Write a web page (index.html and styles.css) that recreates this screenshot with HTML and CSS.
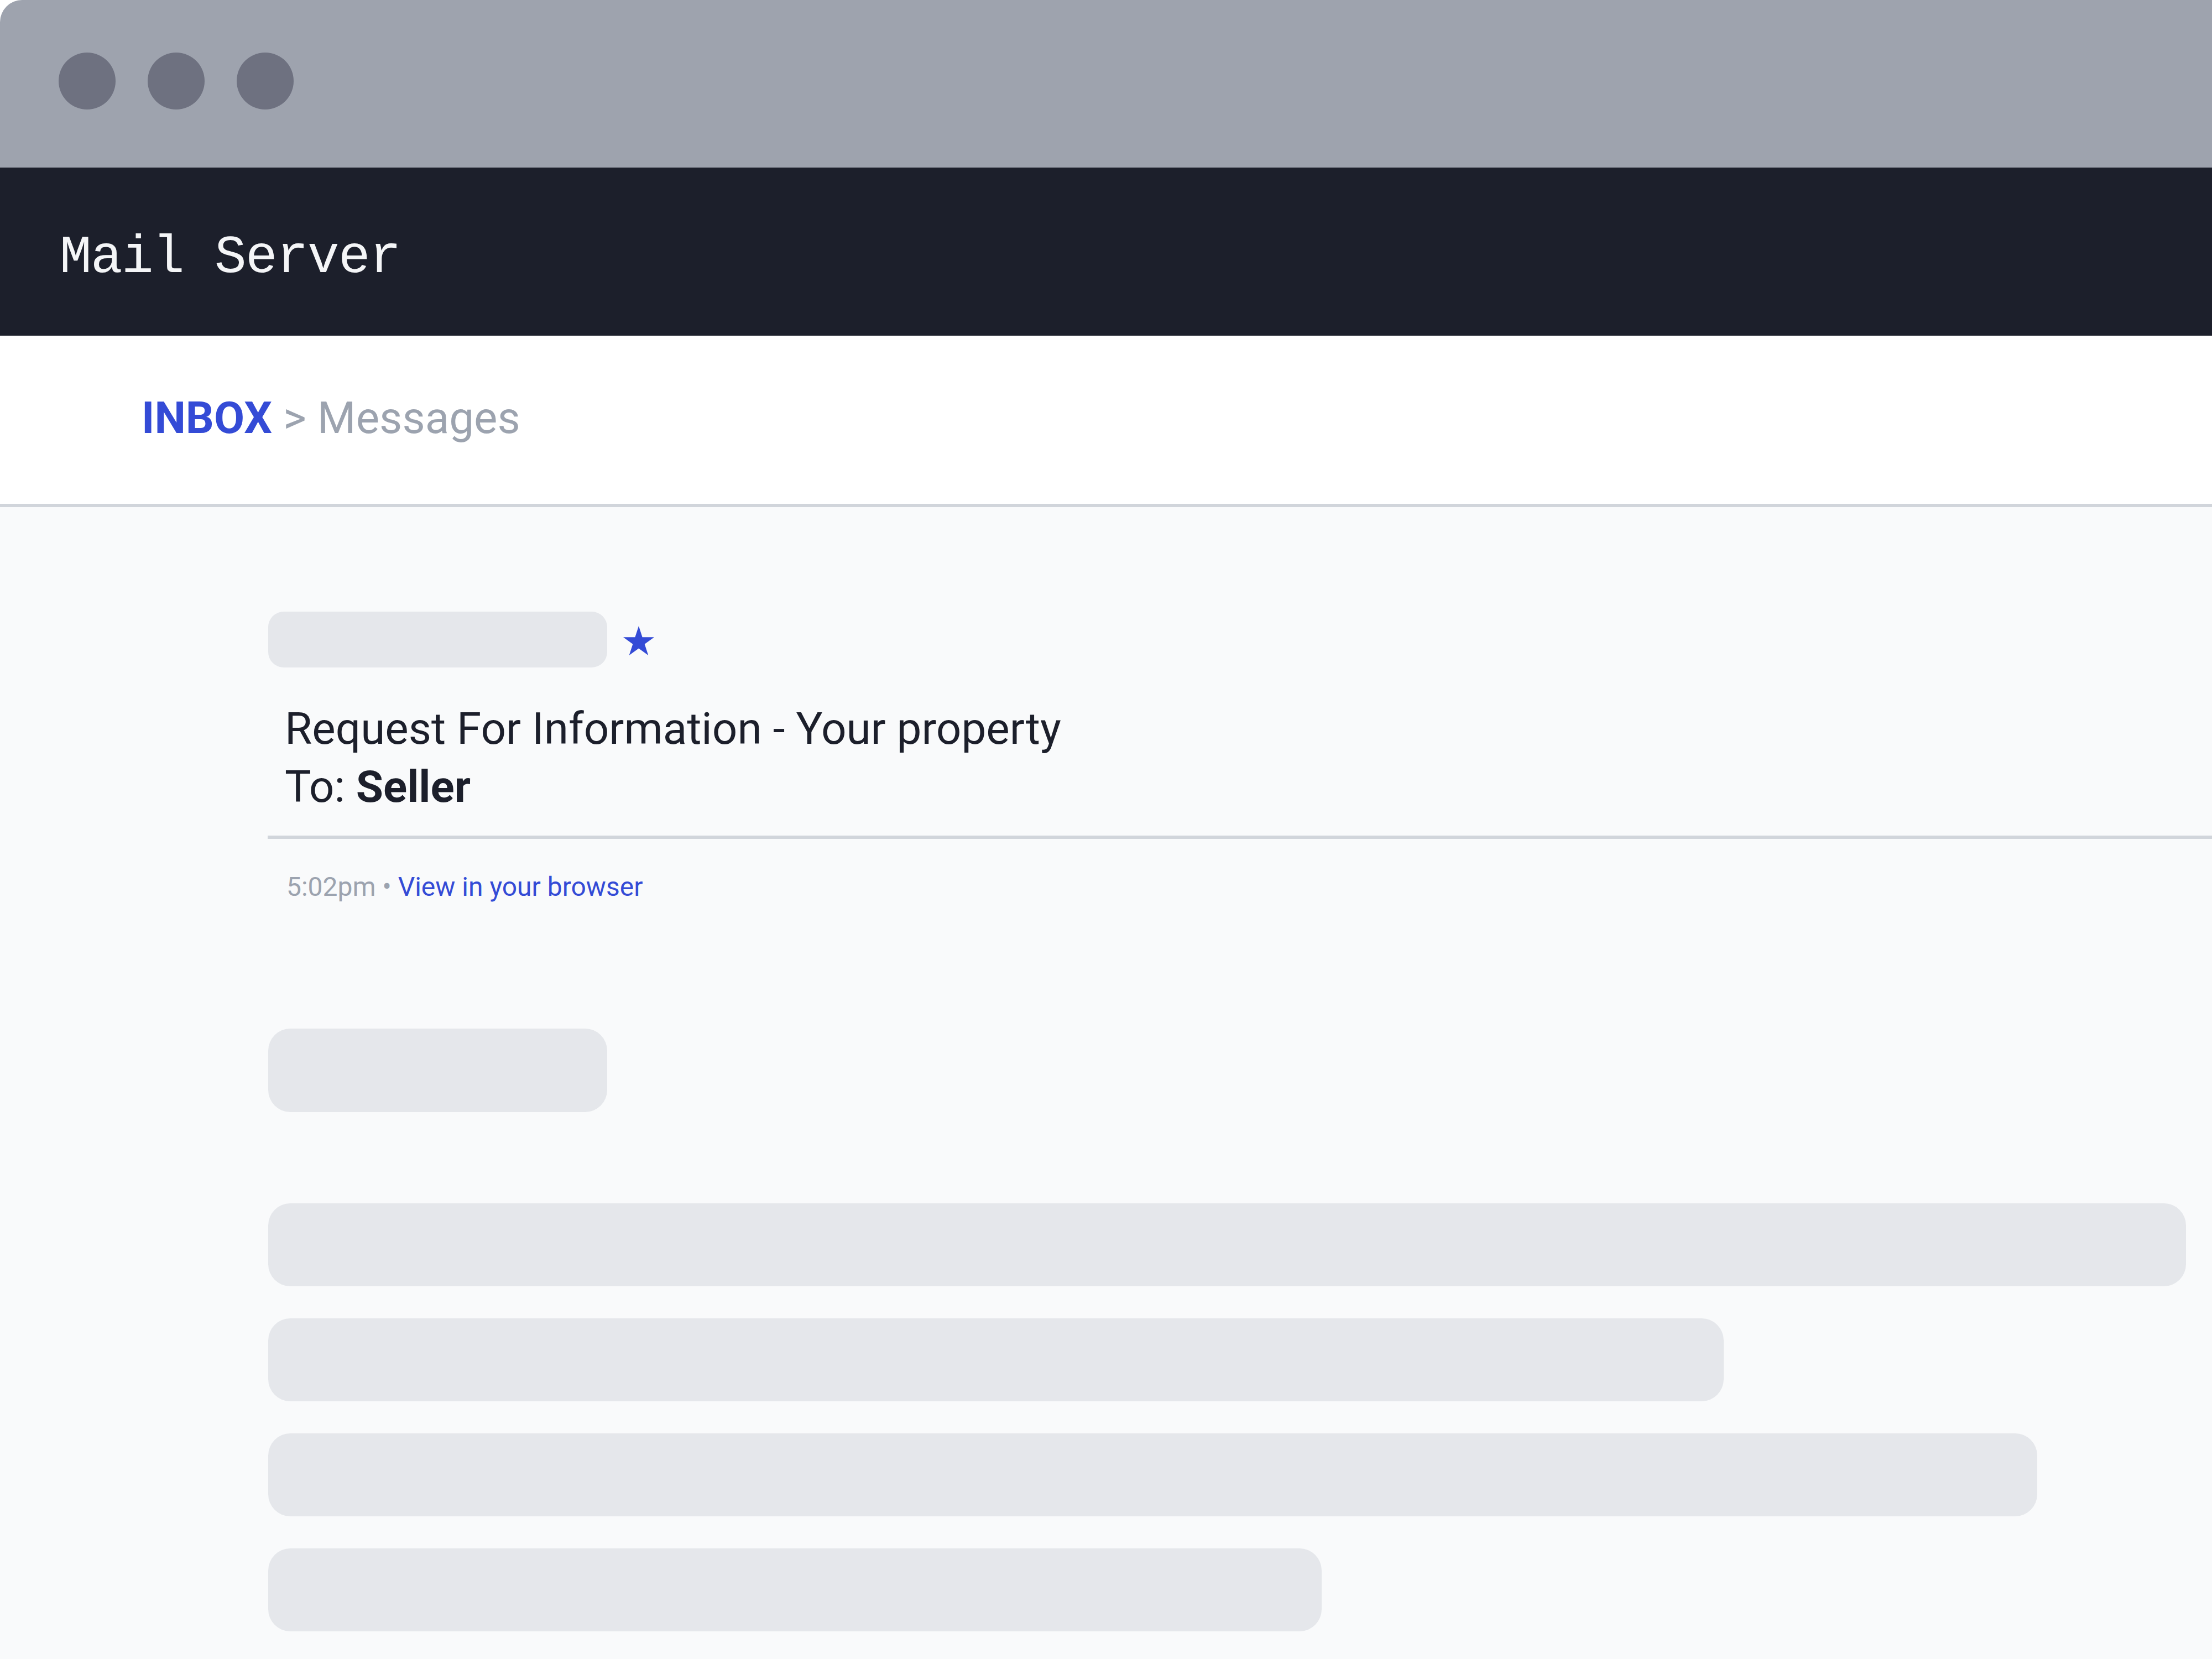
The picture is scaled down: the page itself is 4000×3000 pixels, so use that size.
FILE: index.html
```html
<!DOCTYPE html>
<html>
<head>
<meta charset="utf-8">
<link rel="stylesheet" href="styles.css">
</head>
<body>
<div class="window">
  <div class="titlebar">
    <span class="dot"></span>
    <span class="dot"></span>
    <span class="dot"></span>
  </div>
  <div class="appbar">
    <span class="app-title">Mail Server</span>
  </div>
  <div class="crumbs">
    <span class="crumb-main">INBOX</span>
    <span class="crumb-sep">&gt;</span>
    <span class="crumb-sub">Messages</span>
  </div>
  <div class="content">
    <div class="sender-row">
      <div class="skel skel-sender"></div>
      <svg class="star" viewBox="0 0 56 53" aria-hidden="true">
        <polygon points="28,0 34.6,20.2 56,20.2 38.7,32.7 45.3,53 28,40.5 10.7,53 17.3,32.7 0,20.2 21.4,20.2" fill="#344bd6"/>
      </svg>
    </div>
    <div class="subject">
      <div>Request For Information - Your property</div>
      <div>To: <b>Seller</b></div>
    </div>
    <div class="divider"></div>
    <div class="meta"><span class="time">5:02pm</span> <span class="bullet">&bull;</span> <span class="link">View in your browser</span></div>
    <div class="skel skel-title"></div>
    <div class="lines">
      <div class="skel skel-line w1"></div>
      <div class="skel skel-line w2"></div>
      <div class="skel skel-line w3"></div>
      <div class="skel skel-line w4"></div>
    </div>
  </div>
</div>
</body>
</html>
```
FILE: styles.css
```css
html, body {
  margin: 0;
  padding: 0;
  background: #ffffff;
}
body {
  width: 4000px;
  height: 3000px;
  overflow: hidden;
  font-family: Roboto, "Liberation Sans", sans-serif;
}
.window {
  width: 4000px;
  height: 3000px;
  border-top-left-radius: 40px;
  overflow: hidden;
  background: #f9fafb;
  display: flex;
  flex-direction: column;
}
.titlebar {
  height: 303px;
  flex: none;
  background: #9ea3ae;
  display: flex;
  align-items: center;
  gap: 58px;
  padding-left: 106px;
  padding-bottom: 10px;
  box-sizing: border-box;
}
.dot {
  width: 103px;
  height: 103px;
  border-radius: 50%;
  background: #6e7180;
}
.appbar {
  height: 304px;
  flex: none;
  background: #1c1f2b;
  display: flex;
  align-items: center;
  padding-left: 108px;
  padding-top: 22px;
  box-sizing: border-box;
}
.app-title {
  font-family: "Liberation Mono", "DejaVu Sans Mono", monospace;
  font-size: 96px;
  letter-spacing: -1.6px;
  color: #f4f5f7;
  white-space: pre;
}
.crumbs {
  height: 310px;
  flex: none;
  background: #ffffff;
  border-bottom: 6px solid #d1d5db;
  box-sizing: border-box;
  display: flex;
  align-items: center;
  padding-left: 256px;
  padding-bottom: 6px;
  font-size: 80px;
  gap: 20px;
}
.crumb-main {
  font-weight: 700;
  color: #344bd6;
}
.crumb-sep, .crumb-sub {
  color: #9ca3af;
}
.content {
  padding-left: 485px;
  padding-top: 189px;
  display: flex;
  flex-direction: column;
}
.skel {
  background: #e5e7eb;
}
.sender-row {
  display: flex;
  align-items: center;
  gap: 29px;
}
.skel-sender {
  width: 613px;
  height: 101px;
  border-radius: 28px;
}
.star {
  width: 56px;
  height: 53px;
  margin-top: 4px;
}
.subject {
  margin-top: 59px;
  padding-left: 30px;
  font-size: 80px;
  line-height: 105px;
  color: #1c1f2b;
}
.subject b {
  font-weight: 700;
}
.divider {
  margin-top: 35px;
  height: 6px;
  background: #d1d5db;
  margin-left: -1px;
}
.meta {
  margin-top: 57px;
  padding-left: 33px;
  font-size: 48px;
  line-height: 60px;
  color: #9ca3af;
}
.meta .link {
  color: #344bd6;
}
.skel-title {
  margin-top: 226px;
  width: 613px;
  height: 151px;
  border-radius: 40px;
}
.lines {
  margin-top: 165px;
  display: flex;
  flex-direction: column;
  gap: 58px;
}
.skel-line {
  height: 150px;
  border-radius: 40px;
}
.w1 { width: 3468px; }
.w2 { width: 2632px; }
.w3 { width: 3199px; }
.w4 { width: 1905px; }
```
